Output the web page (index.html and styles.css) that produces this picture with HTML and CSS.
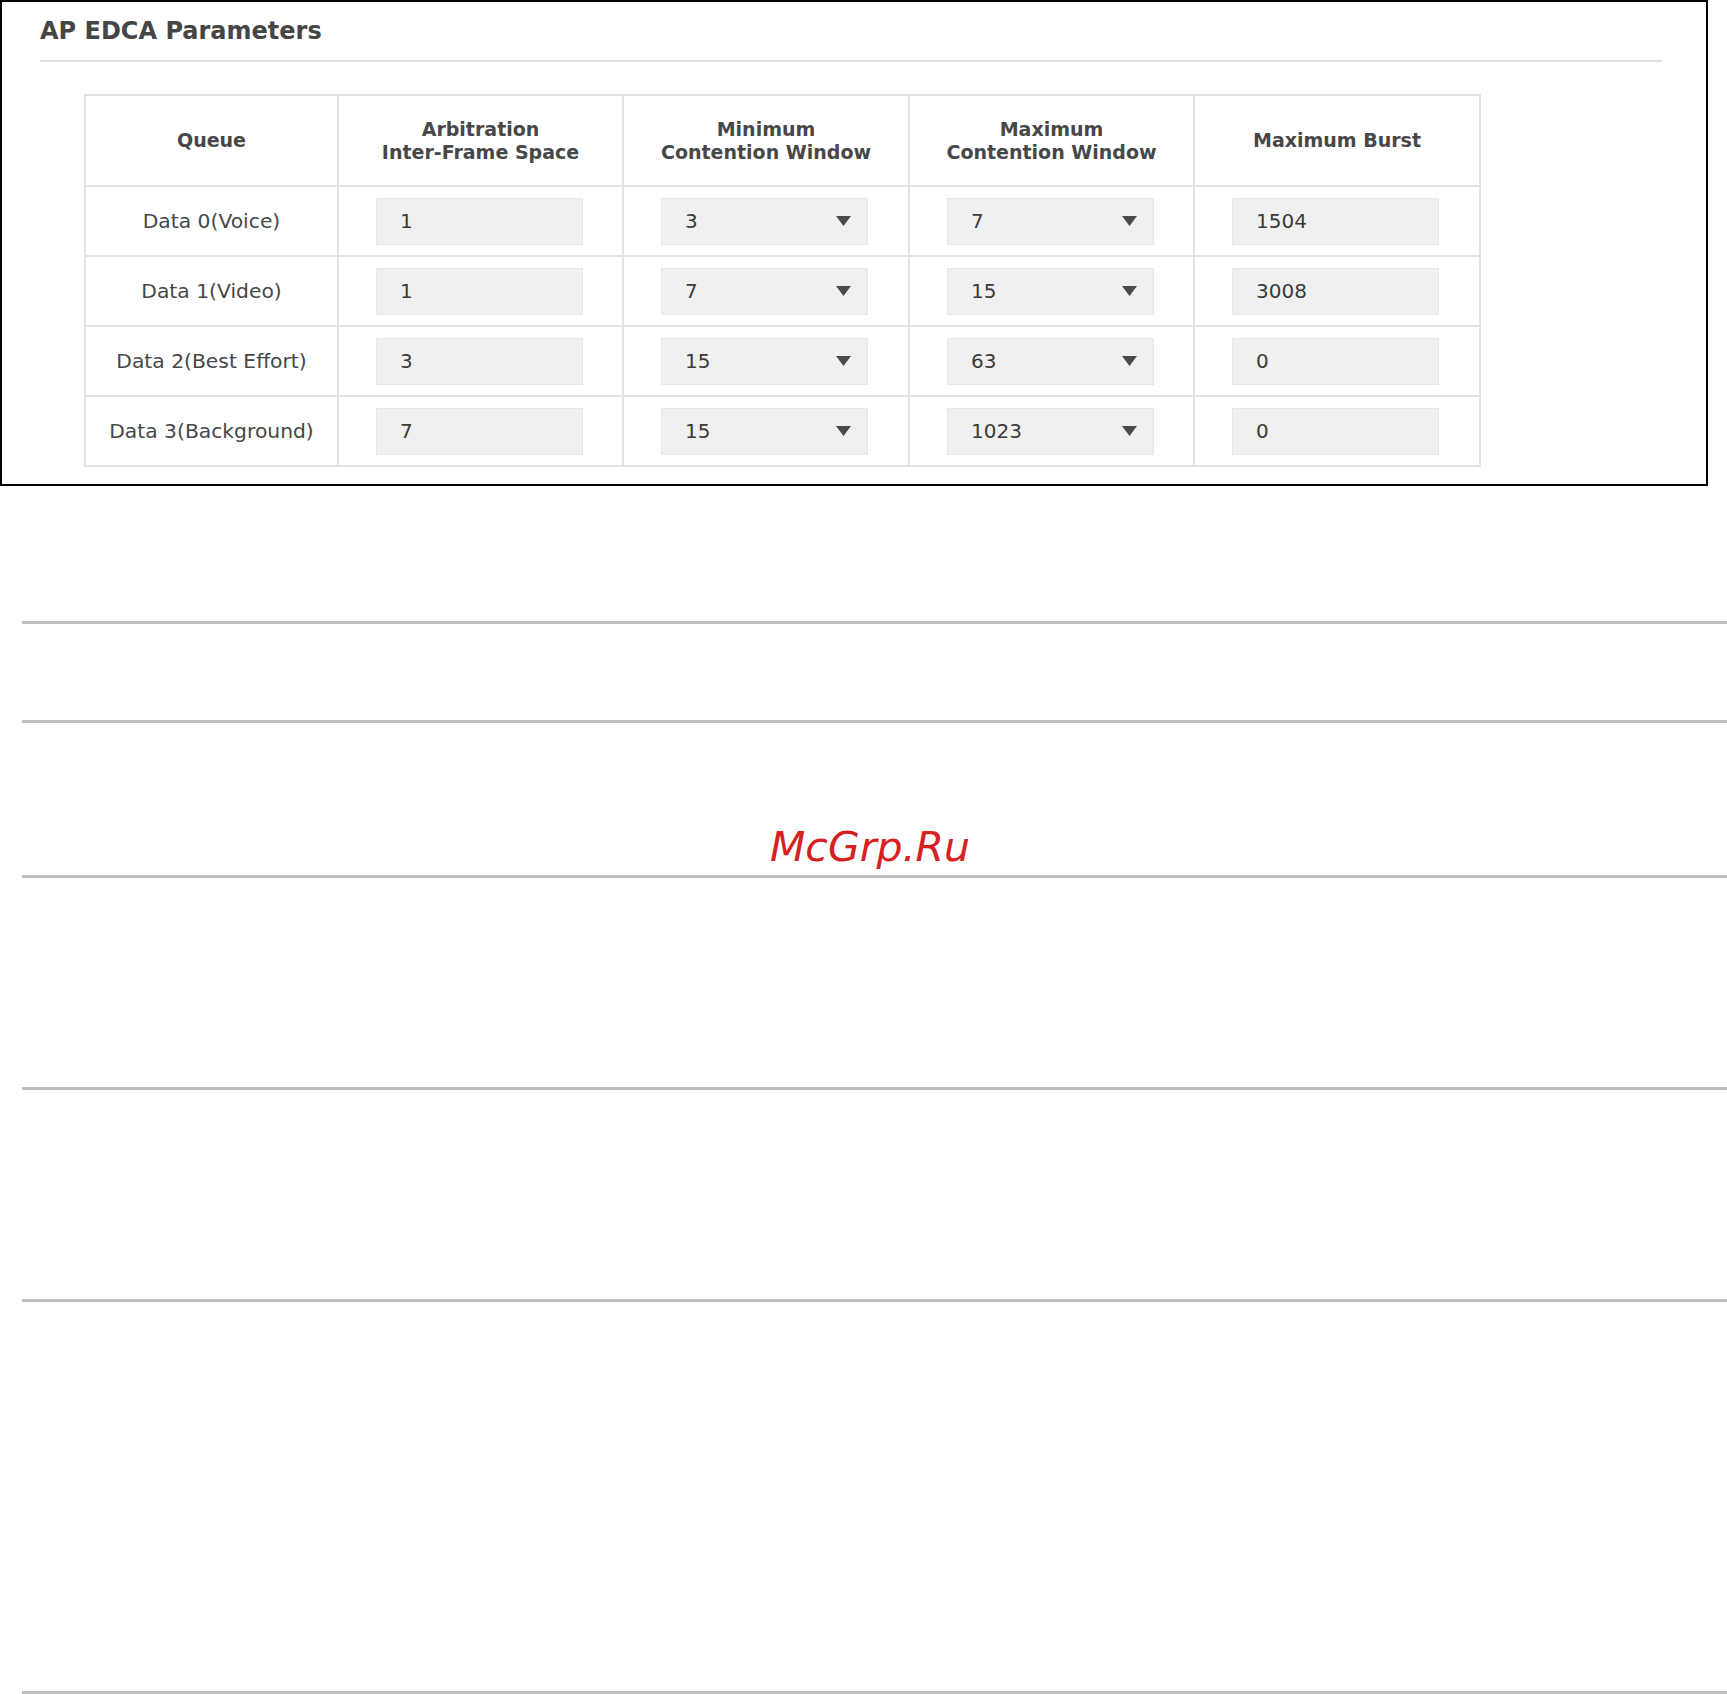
FILE: index.html
```html
<!DOCTYPE html>
<html lang="en">
<head>
<meta charset="utf-8">
<title>AP EDCA Parameters</title>
<link rel="stylesheet" href="styles.css">
</head>
<body>
<div class="page">
  <section class="panel">
    <h2 class="panel-title">AP EDCA Parameters</h2>
    <table class="edca">
      <colgroup>
        <col class="c-queue"><col class="c-aifs"><col class="c-cwmin"><col class="c-cwmax"><col class="c-burst">
      </colgroup>
      <thead>
        <tr>
          <th>Queue</th>
          <th>Arbitration<br>Inter-Frame Space</th>
          <th>Minimum<br>Contention Window</th>
          <th>Maximum<br>Contention Window</th>
          <th>Maximum Burst</th>
        </tr>
      </thead>
      <tbody>
        <tr>
          <td class="q">Data 0(Voice)</td>
          <td><div class="field">1</div></td>
          <td><div class="field select"><span>3</span><svg class="arrow" width="15" height="10" viewBox="0 0 15 10"><path d="M0 0H15L7.5 10Z"/></svg></div></td>
          <td><div class="field select"><span>7</span><svg class="arrow" width="15" height="10" viewBox="0 0 15 10"><path d="M0 0H15L7.5 10Z"/></svg></div></td>
          <td><div class="field">1504</div></td>
        </tr>
        <tr>
          <td class="q">Data 1(Video)</td>
          <td><div class="field">1</div></td>
          <td><div class="field select"><span>7</span><svg class="arrow" width="15" height="10" viewBox="0 0 15 10"><path d="M0 0H15L7.5 10Z"/></svg></div></td>
          <td><div class="field select"><span>15</span><svg class="arrow" width="15" height="10" viewBox="0 0 15 10"><path d="M0 0H15L7.5 10Z"/></svg></div></td>
          <td><div class="field">3008</div></td>
        </tr>
        <tr>
          <td class="q">Data 2(Best Effort)</td>
          <td><div class="field">3</div></td>
          <td><div class="field select"><span>15</span><svg class="arrow" width="15" height="10" viewBox="0 0 15 10"><path d="M0 0H15L7.5 10Z"/></svg></div></td>
          <td><div class="field select"><span>63</span><svg class="arrow" width="15" height="10" viewBox="0 0 15 10"><path d="M0 0H15L7.5 10Z"/></svg></div></td>
          <td><div class="field">0</div></td>
        </tr>
        <tr>
          <td class="q">Data 3(Background)</td>
          <td><div class="field">7</div></td>
          <td><div class="field select"><span>15</span><svg class="arrow" width="15" height="10" viewBox="0 0 15 10"><path d="M0 0H15L7.5 10Z"/></svg></div></td>
          <td><div class="field select"><span>1023</span><svg class="arrow" width="15" height="10" viewBox="0 0 15 10"><path d="M0 0H15L7.5 10Z"/></svg></div></td>
          <td><div class="field">0</div></td>
        </tr>
      </tbody>
    </table>
  </section>

  <div class="rule r1"></div>
  <div class="rule r2"></div>
  <div class="rule r3"></div>
  <div class="rule r4"></div>
  <div class="rule r5"></div>
  <div class="rule r6"></div>

  <div class="watermark">McGrp.Ru</div>
</div>
</body>
</html>
```

FILE: styles.css
```css
html, body {
  margin: 0;
  padding: 0;
  background: #fff;
}

.page {
  position: relative;
  width: 1727px;
  height: 1694px;
  overflow: hidden;
  font-family: "DejaVu Sans", Verdana, sans-serif;
}

.panel {
  width: 1704px;
  height: 482px;
  border: 2px solid #000;
}

.panel-title {
  margin: 0 44px 0 38px;
  padding: 14px 0 14px 0;
  font-size: 24px;
  line-height: 30px;
  font-weight: bold;
  color: #454545;
  border-bottom: 2px solid #e2e2e2;
}

.edca {
  margin: 32px 0 0 82px;
  border-collapse: collapse;
  table-layout: fixed;
  width: 1395px;
  border: 2px solid #e3e3e3;
}

.c-queue { width: 253px; }
.c-aifs { width: 285px; }
.c-cwmin { width: 286px; }
.c-cwmax { width: 285px; }
.c-burst { width: 286px; }

.edca th,
.edca td {
  border: 2px solid #e3e3e3;
  padding: 0;
  vertical-align: middle;
}

.edca th {
  height: 89px;
  font-size: 19px;
  line-height: 23px;
  font-weight: bold;
  color: #474747;
  text-align: center;
}

.edca td {
  height: 68px;
  padding-left: 37px;
}

.edca td.q {
  padding-left: 0;
  text-align: center;
  font-size: 20.3px;
  color: #474747;
}

.field {
  box-sizing: border-box;
  width: 207px;
  height: 47px;
  padding: 0 16px 0 23px;
  background: #f0f0f0;
  border: 1px solid #e6e6e6;
  font-size: 20px;
  line-height: 45px;
  color: #3a3a3a;
}

.select {
  display: flex;
  align-items: center;
  justify-content: space-between;
}

.arrow {
  display: block;
  fill: #4a4a4a;
}

.rule {
  margin-left: 22px;
  height: 3px;
  background: #bfbfbf;
}

.r1 { margin-top: 135px; }
.r2 { margin-top: 96px; }
.r3 { margin-top: 152px; }
.r4 { margin-top: 209px; }
.r5 { margin-top: 209px; }
.r6 { margin-top: 389px; }

.watermark {
  position: absolute;
  left: 770px;
  top: 827px;
  font-family: "DejaVu Sans", sans-serif;
  font-style: italic;
  font-size: 41px;
  line-height: 40px;
  color: #d8201f;
}
```
